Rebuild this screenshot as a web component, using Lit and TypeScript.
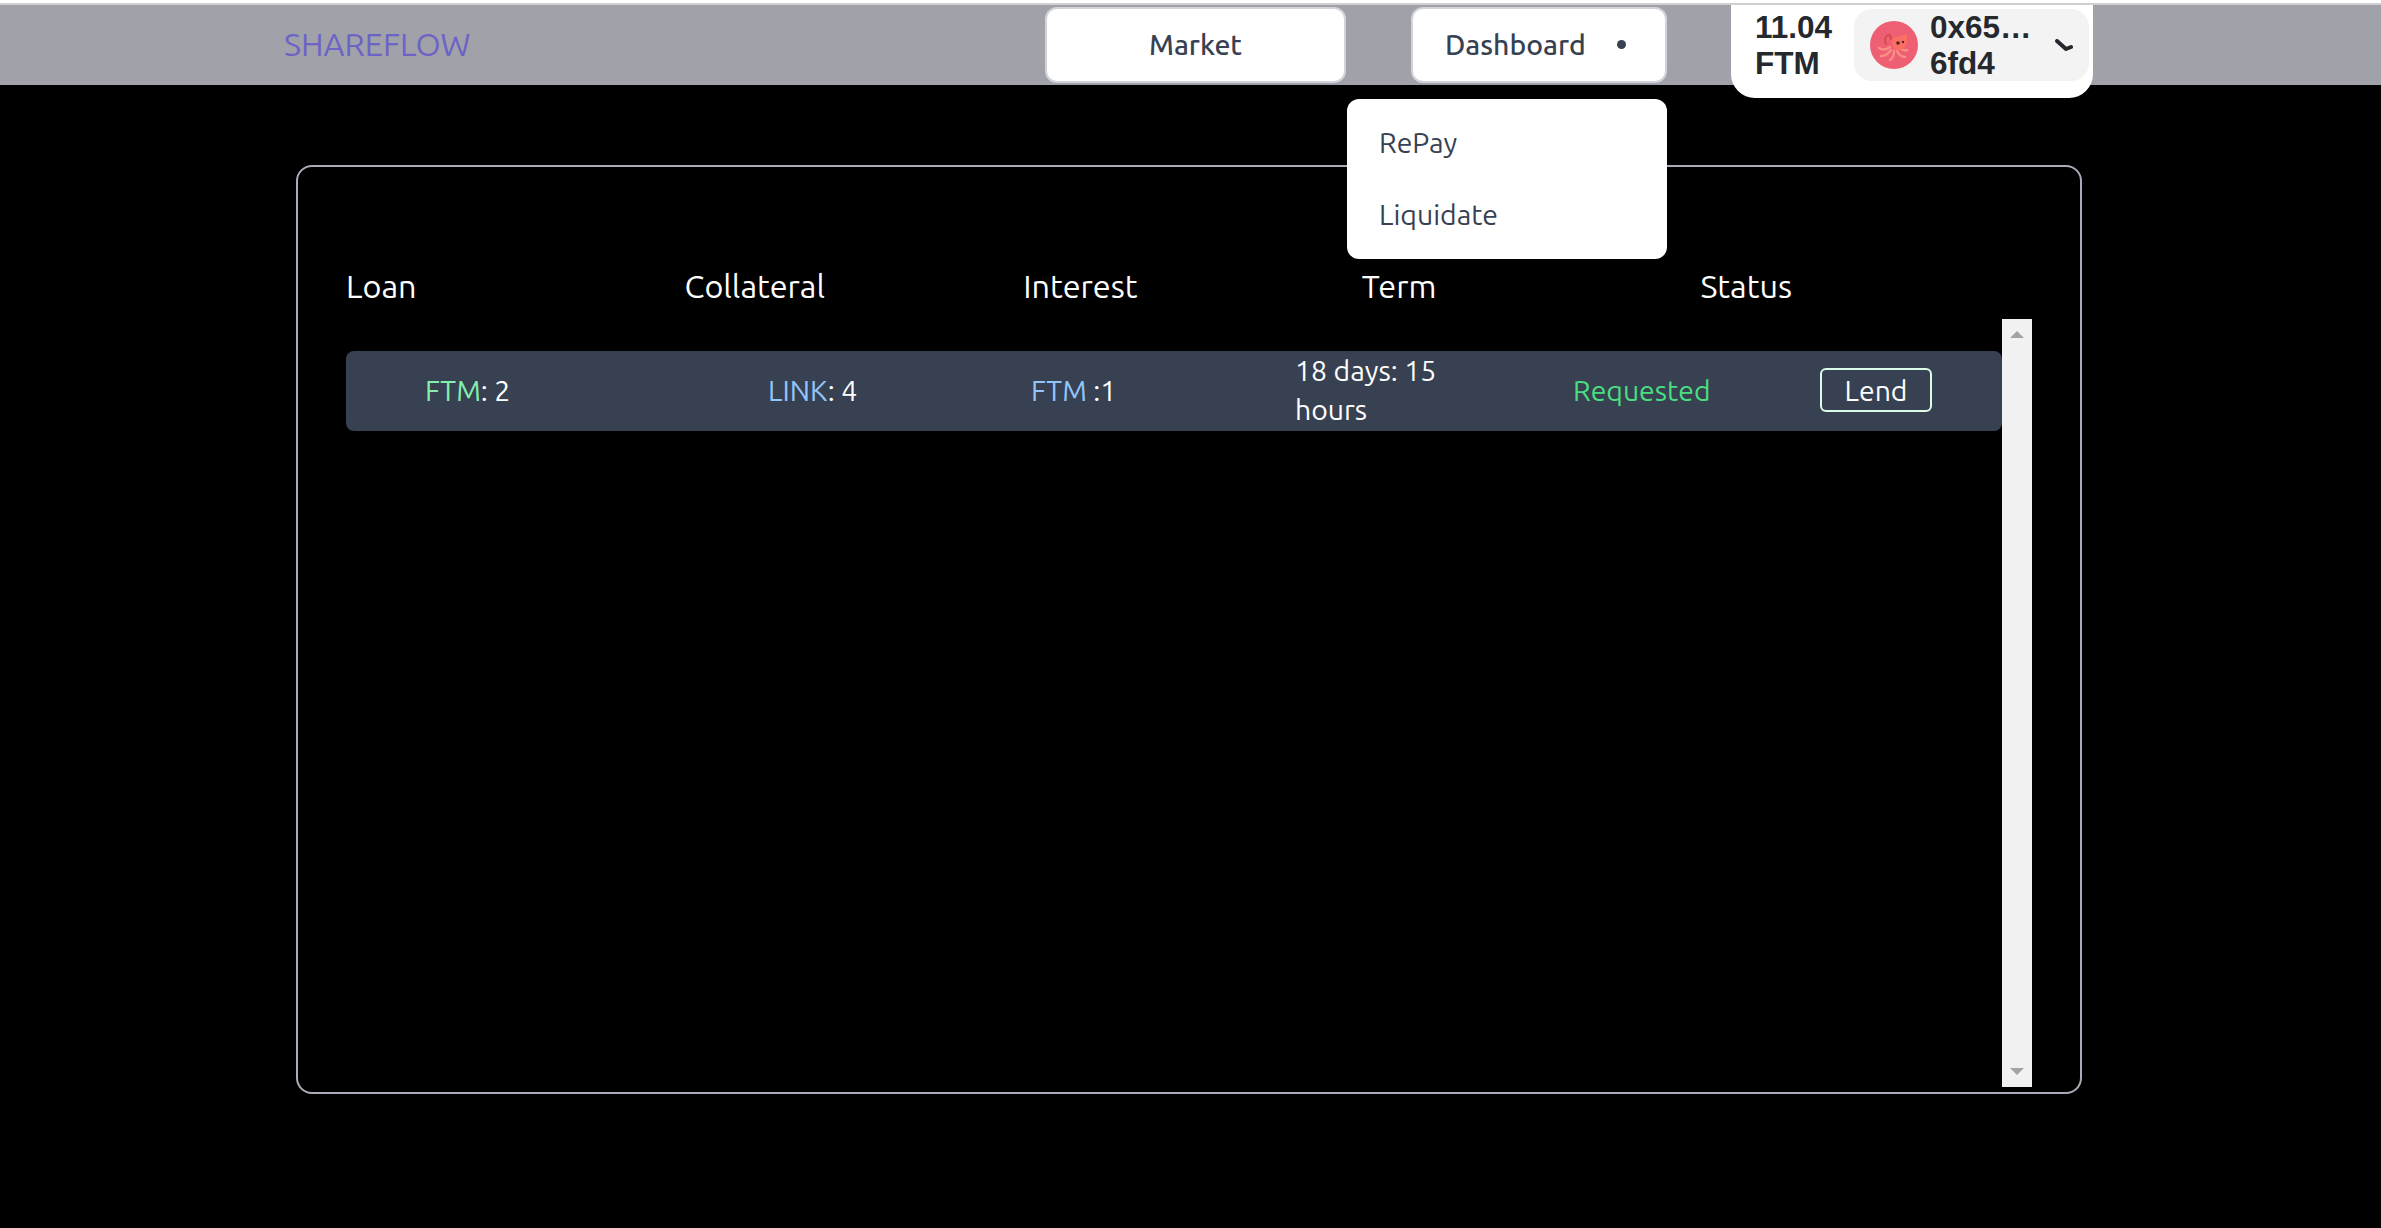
import { LitElement, html, css } from "lit";
import { customElement } from "lit/decorators.js";

const octopus = html`<svg class="avatar" viewBox="0 0 48 48">
  <circle cx="24" cy="24" r="24" fill="#ee5f74"></circle>
  <g fill="none" stroke="#fb8f86" stroke-width="2.4" stroke-linecap="round">
    <path d="M20 26c-4 3-8 3-11 1"></path>
    <path d="M21 29c-3 4-6 6-10 6"></path>
    <path d="M24 30c0 4-1 7-4 9"></path>
    <path d="M27 30c2 4 4 6 8 6"></path>
    <path d="M30 27c2 2 4 3 7 2"></path>
  </g>
  <path d="M23 17l14-4 0 9-4 6-7 2-4-6c-1-3-1-5 1-7z" fill="#fb6f63"></path>
  <path d="M16 23c-2-3-1-8 2-9 2 0 3 2 3 4" fill="none" stroke="#d24a4a" stroke-width="1.8" stroke-linecap="round"></path>
  <circle cx="28" cy="22" r="1.8" fill="#5a2020"></circle>
  <circle cx="33" cy="21" r="1.2" fill="#5a2020"></circle>
</svg>`;

@customElement("app-root")
export class AppRoot extends LitElement {
  static styles = css`
    :host {
      display: block;
      height: 1228px;
      background: #000;
      overflow: hidden;
      font-family: "Ubuntu", "Noto Sans", sans-serif;
      color: #fff;
    }
    .strip {
      height: 5px;
      box-sizing: border-box;
      background: #fff;
      border-bottom: 2px solid #d0d0d0;
    }
    .nav {
      height: 80px;
      background: #a1a1aa;
      display: flex;
      align-items: flex-start;
      padding-left: 284px;
      position: relative;
      z-index: 2;
    }
    .logo {
      width: 761px;
      line-height: 78px;
      font-size: 32.4px;
      color: #6b63c6;
    }
    .btn {
      height: 76px;
      margin-top: 2px;
      box-sizing: border-box;
      background: #fff;
      border: 2px solid #d1d5db;
      border-radius: 12px;
      color: #374151;
      font-size: 28.4px;
      font-weight: 500;
      display: flex;
      align-items: center;
      padding-bottom: 2px;
    }
    .market {
      width: 301px;
      justify-content: center;
      margin-right: 65px;
    }
    .dash {
      width: 256px;
      padding-left: 32px;
      position: relative;
      margin-right: 64px;
    }
    .dot {
      width: 9px;
      height: 9px;
      border-radius: 50%;
      background: #374151;
      margin-left: 31px;
    }
    .menu {
      position: absolute;
      top: 90px;
      right: -2px;
      width: 320px;
      height: 160px;
      box-sizing: border-box;
      padding: 8px 0;
      background: #fff;
      border-radius: 12px;
      color: #374151;
      font-size: 28.4px;
      font-weight: 400;
    }
    .menu div {
      height: 72px;
      line-height: 72px;
      padding-left: 32px;
    }
    .wallet {
      width: 362px;
      height: 93px;
      box-sizing: border-box;
      background: #fff;
      border-radius: 0 0 24px 24px;
      padding: 4px 4px 0 24px;
      display: flex;
      align-items: flex-start;
      font-family: "Liberation Sans", Arial, sans-serif;
      font-weight: 700;
      font-size: 31.5px;
      line-height: 36px;
      color: #25292e;
    }
    .bal {
      width: 99px;
      flex: none;
    }
    .acct {
      flex: 1;
      height: 72px;
      border-radius: 18px;
      background: #f3f3f3;
      display: flex;
      align-items: center;
      padding-left: 16px;
    }
    .avatar {
      width: 48px;
      height: 48px;
      flex: none;
      margin-right: 12px;
    }
    .addr {
      width: 125px;
      flex: none;
    }
    .chev {
      width: 18px;
      height: 13px;
      flex: none;
    }
    .panel {
      box-sizing: border-box;
      width: 1786px;
      height: 929px;
      margin: 80px 0 0 296px;
      border: 2px solid #a9abb8;
      border-radius: 16px;
      padding: 97px 48px 5px;
      display: flex;
      flex-direction: column;
    }
    .head {
      display: grid;
      grid-template-columns: repeat(5, 1fr);
      gap: 7px;
      height: 55px;
      font-size: 32.4px;
      line-height: 44px;
    }
    .body {
      flex: 1;
      display: flex;
      min-height: 0;
    }
    .rows {
      flex: 1;
      padding-top: 32px;
    }
    .row {
      height: 80px;
      border-radius: 8px;
      background: #374151;
      display: grid;
      grid-template-columns: 343px 263px 264px 278px 247px auto;
      padding-left: 79px;
      align-items: center;
      font-size: 28.4px;
      line-height: 39px;
    }
    .row > div {
      padding-bottom: 3px;
    }
    .term {
      width: 170px;
    }
    .g { color: #86efac; }
    .b { color: #93c5fd; }
    .req { color: #4ade80; }
    .row > .lend {
      width: 112px;
      height: 44px;
      margin-bottom: 3px;
      padding-bottom: 0;
      box-sizing: border-box;
      border: 2px solid #dcfce7;
      border-radius: 6px;
      display: flex;
      align-items: center;
      justify-content: center;
      color: #fff;
    }
    .bar {
      width: 30px;
      flex: none;
      background: #f1f1f1;
      display: flex;
      flex-direction: column;
      justify-content: space-between;
      align-items: center;
      padding: 12px 0;
      box-sizing: border-box;
    }
    .up, .down {
      width: 0;
      height: 0;
      border-left: 7px solid transparent;
      border-right: 7px solid transparent;
    }
    .up { border-bottom: 7px solid #a3a3a3; }
    .down { border-top: 7px solid #a3a3a3; }
  `;

  render() {
    return html`
      <div class="strip"></div>
      <div class="nav">
        <div class="logo">SHAREFLOW</div>
        <div class="btn market">Market</div>
        <div class="btn dash">
          Dashboard<span class="dot"></span>
          <div class="menu"><div>RePay</div><div>Liquidate</div></div>
        </div>
        <div class="wallet">
          <div class="bal">11.04 FTM</div>
          <div class="acct">
            ${octopus}
            <div class="addr">0x65… 6fd4</div>
            <svg class="chev" viewBox="0 0 18 13" fill="none" stroke="#25292e" stroke-width="4" stroke-linecap="round" stroke-linejoin="round">
              <path d="M2 2l9 8 5-2"></path>
            </svg>
          </div>
        </div>
      </div>
      <div class="panel">
        <div class="head">
          <div>Loan</div><div>Collateral</div><div>Interest</div><div>Term</div><div>Status</div>
        </div>
        <div class="body">
          <div class="rows">
            <div class="row">
              <div><span class="g">FTM</span>: 2</div>
              <div><span class="b">LINK</span>: 4</div>
              <div><span class="b">FTM</span> :1</div>
              <div class="term">18 days: 15 hours</div>
              <div class="req">Requested</div>
              <div class="lend">Lend</div>
            </div>
          </div>
          <div class="bar"><span class="up"></span><span class="down"></span></div>
        </div>
      </div>
    `;
  }
}
